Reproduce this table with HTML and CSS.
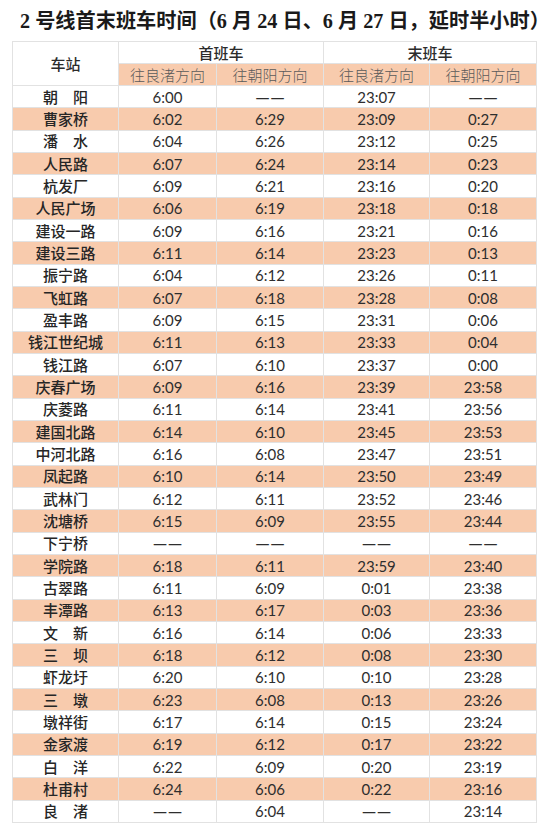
FILE: index.html
```html
<!DOCTYPE html>
<html lang="zh-CN">
<head>
<meta charset="utf-8">
<title>2号线首末班车时间</title>
<link rel="stylesheet" href="styles.css">
</head>
<body>
<h1 class="title">2 号线首末班车时间（6 月 24 日、6 月 27 日，延时半小时）</h1>
<table class="sched">
<colgroup>
<col class="c-st"><col class="c-a"><col class="c-b"><col class="c-c"><col class="c-d">
</colgroup>
<thead>
<tr class="h1"><th rowspan="2" class="st-h">车站</th><th colspan="2">首班车</th><th colspan="2">末班车</th></tr>
<tr class="h2"><th>往良渚方向</th><th>往朝阳方向</th><th>往良渚方向</th><th>往朝阳方向</th></tr>
</thead>
<tbody>
<tr><td class="st">朝　阳</td><td>6:00</td><td class="d"><span class="dd"><span>—</span><span>—</span></span></td><td>23:07</td><td class="d"><span class="dd"><span>—</span><span>—</span></span></td></tr>
<tr class="o"><td class="st">曹家桥</td><td>6:02</td><td>6:29</td><td>23:09</td><td>0:27</td></tr>
<tr><td class="st">潘　水</td><td>6:04</td><td>6:26</td><td>23:12</td><td>0:25</td></tr>
<tr class="o"><td class="st">人民路</td><td>6:07</td><td>6:24</td><td>23:14</td><td>0:23</td></tr>
<tr><td class="st">杭发厂</td><td>6:09</td><td>6:21</td><td>23:16</td><td>0:20</td></tr>
<tr class="o"><td class="st">人民广场</td><td>6:06</td><td>6:19</td><td>23:18</td><td>0:18</td></tr>
<tr><td class="st">建设一路</td><td>6:09</td><td>6:16</td><td>23:21</td><td>0:16</td></tr>
<tr class="o"><td class="st">建设三路</td><td>6:11</td><td>6:14</td><td>23:23</td><td>0:13</td></tr>
<tr><td class="st">振宁路</td><td>6:04</td><td>6:12</td><td>23:26</td><td>0:11</td></tr>
<tr class="o"><td class="st">飞虹路</td><td>6:07</td><td>6:18</td><td>23:28</td><td>0:08</td></tr>
<tr><td class="st">盈丰路</td><td>6:09</td><td>6:15</td><td>23:31</td><td>0:06</td></tr>
<tr class="o"><td class="st">钱江世纪城</td><td>6:11</td><td>6:13</td><td>23:33</td><td>0:04</td></tr>
<tr><td class="st">钱江路</td><td>6:07</td><td>6:10</td><td>23:37</td><td>0:00</td></tr>
<tr class="o"><td class="st">庆春广场</td><td>6:09</td><td>6:16</td><td>23:39</td><td>23:58</td></tr>
<tr><td class="st">庆菱路</td><td>6:11</td><td>6:14</td><td>23:41</td><td>23:56</td></tr>
<tr class="o"><td class="st">建国北路</td><td>6:14</td><td>6:10</td><td>23:45</td><td>23:53</td></tr>
<tr><td class="st">中河北路</td><td>6:16</td><td>6:08</td><td>23:47</td><td>23:51</td></tr>
<tr class="o"><td class="st">凤起路</td><td>6:10</td><td>6:14</td><td>23:50</td><td>23:49</td></tr>
<tr><td class="st">武林门</td><td>6:12</td><td>6:11</td><td>23:52</td><td>23:46</td></tr>
<tr class="o"><td class="st">沈塘桥</td><td>6:15</td><td>6:09</td><td>23:55</td><td>23:44</td></tr>
<tr><td class="st">下宁桥</td><td class="d"><span class="dd"><span>—</span><span>—</span></span></td><td class="d"><span class="dd"><span>—</span><span>—</span></span></td><td class="d"><span class="dd"><span>—</span><span>—</span></span></td><td class="d"><span class="dd"><span>—</span><span>—</span></span></td></tr>
<tr class="o"><td class="st">学院路</td><td>6:18</td><td>6:11</td><td>23:59</td><td>23:40</td></tr>
<tr><td class="st">古翠路</td><td>6:11</td><td>6:09</td><td>0:01</td><td>23:38</td></tr>
<tr class="o"><td class="st">丰潭路</td><td>6:13</td><td>6:17</td><td>0:03</td><td>23:36</td></tr>
<tr><td class="st">文　新</td><td>6:16</td><td>6:14</td><td>0:06</td><td>23:33</td></tr>
<tr class="o"><td class="st">三　坝</td><td>6:18</td><td>6:12</td><td>0:08</td><td>23:30</td></tr>
<tr><td class="st">虾龙圩</td><td>6:20</td><td>6:10</td><td>0:10</td><td>23:28</td></tr>
<tr class="o"><td class="st">三　墩</td><td>6:23</td><td>6:08</td><td>0:13</td><td>23:26</td></tr>
<tr><td class="st">墩祥街</td><td>6:17</td><td>6:14</td><td>0:15</td><td>23:24</td></tr>
<tr class="o"><td class="st">金家渡</td><td>6:19</td><td>6:12</td><td>0:17</td><td>23:22</td></tr>
<tr><td class="st">白　洋</td><td>6:22</td><td>6:09</td><td>0:20</td><td>23:19</td></tr>
<tr class="o"><td class="st">杜甫村</td><td>6:24</td><td>6:06</td><td>0:22</td><td>23:16</td></tr>
<tr><td class="st">良　渚</td><td class="d"><span class="dd"><span>—</span><span>—</span></span></td><td>6:04</td><td class="d"><span class="dd"><span>—</span><span>—</span></span></td><td>23:14</td></tr>
</tbody>
</table>
</body>
</html>
```

FILE: styles.css
```css
html, body {
  margin: 0;
  padding: 0;
  background: #ffffff;
}

body {
  width: 550px;
  font-family: Lato, "Noto Sans CJK SC", sans-serif;
  color: #2b2b2b;
}

.title {
  margin: 0;
  padding: 0 0 0 20px;
  height: 41px;
  line-height: 42px;
  font-size: 20.2px;
  font-weight: bold;
  font-family: "Liberation Serif", "Noto Sans CJK SC", serif;
  color: #1a1a1a;
  white-space: nowrap;
}

.sched {
  margin-left: 12px;
  width: 524px;
  border-collapse: collapse;
  table-layout: fixed;
}

.c-st { width: 106px; }
.c-a { width: 98px; }
.c-b { width: 107px; }
.c-c { width: 106px; }
.c-d { width: 107px; }

.sched th,
.sched td {
  border: 1px solid #e2e2e2;
  padding: 0;
  text-align: center;
  vertical-align: middle;
}

.sched th {
  height: 21px;
  font-family: "Noto Sans CJK SC", sans-serif;
  font-size: 15px;
  line-height: 20px;
}

.h1 th {
  font-weight: 500;
  color: #2b2b2b;
}

.h2 th {
  background: #f8cbad;
  font-weight: 300;
  color: #5a5a5a;
}

.sched td {
  height: 21.33px;
  font-size: 15px;
  line-height: 20px;
  color: #2e2e2e;
}

.sched td.st {
  font-family: "Noto Sans CJK SC", sans-serif;
  font-size: 15px;
  font-weight: 500;
  color: #262626;
}

.dd {
  display: inline-flex;
  gap: 0;
  font-family: Lato, sans-serif;
  font-size: 19px;
  line-height: 20px;
  vertical-align: top;
}

.sched tr.o td {
  background: #f8cbad;
}
```
